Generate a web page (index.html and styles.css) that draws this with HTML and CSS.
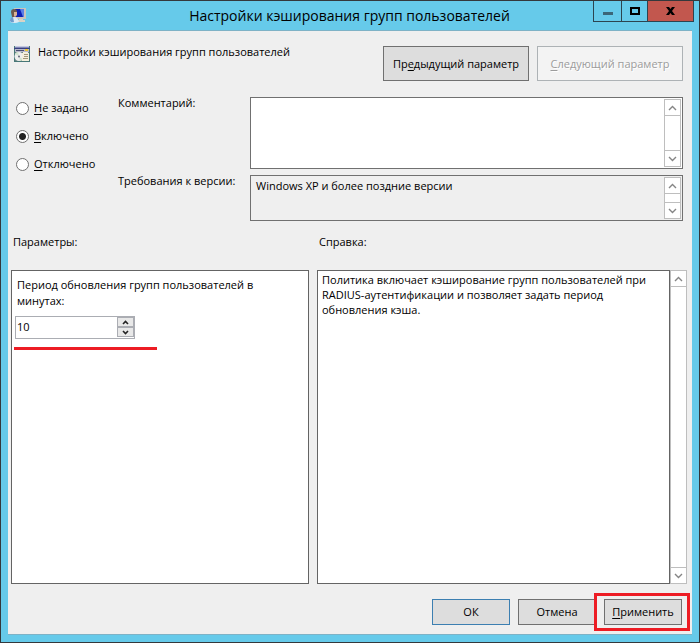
FILE: index.html
```html
<!DOCTYPE html>
<html lang="ru">
<head>
<meta charset="utf-8">
<title>Настройки кэширования групп пользователей</title>
<link rel="stylesheet" href="styles.css">
</head>
<body>
<div class="window">
  <header class="titlebar">
    <svg class="app-icon" viewBox="0 0 16 16" aria-hidden="true">
      <path d="M4 0h12v11H4z" fill="#c9c5bb"/>
      <path d="M5 1h9v8H5z" fill="#0c1fb4"/>
      <path d="M10 1h4v8h-1z" fill="#5b7fe6"/>
      <path d="M9 11h4v1h2v2H8v-2h1z" fill="#d8d3c6"/>
      <path d="M1 4q0-3 3-3t3 3v3L5 9 2 9z" fill="#6f5a4c"/>
      <path d="M4 4h3v3L5 9 4 8z" fill="#d9b295"/>
      <path d="M0 14q0-5 4-5t5 5q-4 2-9 0z" fill="#dce9f4"/>
      <path d="M0 13q0-4 3-4l1 5q-3 1-4-1z" fill="#6c9ccc"/>
    </svg>
    <h1 class="title">Настройки кэширования групп пользователей</h1>
    <div class="caption-buttons">
      <button class="caption" type="button" aria-label="Свернуть"><svg width="10" height="10" viewBox="0 0 10 10"><path d="M0 6h10v3H0z" fill="#3b6678"/></svg></button>
      <button class="caption" type="button" aria-label="Развернуть"><svg width="10" height="8" viewBox="0 0 10 8"><path d="M1 1h8v6H1z" fill="none" stroke="#000" stroke-width="2"/></svg></button>
      <button class="caption close" type="button" aria-label="Закрыть"><svg width="9" height="8" viewBox="0 0 9 8"><path d="M0 0h3l1.500 2L6 0h3L6 4l3 4H6L4.500 6 3 8H0l3-4z" fill="#000"/></svg></button>
    </div>
  </header>

  <main class="client">
    <section class="policy">
      <svg class="policy-icon" viewBox="0 0 16 16" aria-hidden="true">
        <path d="M0 0h16v16H0z" fill="#477777"/>
        <path d="M1 0h14v1H1z" fill="#c5c8e0"/>
        <path d="M1 1h14v1H1z" fill="#8086b5"/>
        <path d="M0 2h16v1H0z" fill="#39407f"/>
        <path d="M1 3h14v3H1z" fill="#b9b9cb"/>
        <path d="M2 4h8v1H2z" fill="#4a4f70"/>
        <path d="M11 3h3v2h-3z" fill="#edc52e"/>
        <path d="M1 6h14v9H1z" fill="#6c8583"/>
        <circle cx="5" cy="10.500" r="4.500" fill="#eeeeee"/>
        <path d="M5 10L1 8q1-2 3-2zM5 11l4 2q-1 2-3 2z" fill="#d2e3ce"/>
        <circle cx="5" cy="10.500" r="1" fill="#62677a"/>
        <path d="M9 6h5v1h1v8H8V7h1z" fill="#f4efdc"/>
        <path d="M10 8h4v1h-4zM10 10h4v1h-4zM9 12h5v1H9z" fill="#a2977c"/>
      </svg>
      <h2 class="policy-name">Настройки кэширования групп пользователей</h2>
      <button class="button nav" type="button"><span>Пр<u>е</u>дыдущий параметр</span></button>
      <button class="button nav" type="button" disabled><span><u>С</u>ледующий параметр</span></button>
    </section>

    <section class="state">
      <div class="radios">
        <label class="radio"><input type="radio" name="state"><span><u>Н</u>е задано</span></label>
        <label class="radio"><input type="radio" name="state" checked><span><u>В</u>ключено</span></label>
        <label class="radio"><input type="radio" name="state"><span><u>О</u>тключено</span></label>
      </div>
      <div class="fields">
        <label class="field-label" for="comment">Комментарий:</label>
        <div class="textbox tall">
          <textarea id="comment"></textarea>
          <div class="scrollbar">
            <button type="button" aria-label="Вверх"><svg viewBox="0 0 9 6"><path d="M1 5l3.500-3.500L8 5"/></svg></button>
            <button type="button" aria-label="Вниз"><svg viewBox="0 0 9 6"><path d="M1 1l3.500 3.500L8 1"/></svg></button>
          </div>
        </div>
        <label class="field-label" for="supported">Требования к версии:</label>
        <div class="textbox short">
          <textarea id="supported" readonly>Windows XP и более поздние версии</textarea>
          <div class="scrollbar">
            <button type="button" aria-label="Вверх"><svg viewBox="0 0 9 6"><path d="M1 5l3.500-3.500L8 5"/></svg></button>
            <button type="button" aria-label="Вниз"><svg viewBox="0 0 9 6"><path d="M1 1l3.500 3.500L8 1"/></svg></button>
          </div>
        </div>
      </div>
    </section>

    <section class="panes">
      <div class="pane">
        <h3 class="pane-title">Параметры:</h3>
        <div class="options">
          <label class="option-label" for="period">Период обновления групп пользователей в минутах:</label>
          <div class="spinner">
            <input id="period" type="text" inputmode="numeric" value="10">
            <div class="spin-buttons">
              <button type="button" aria-label="Больше"><svg viewBox="0 0 7 5"><path d="M1 4l2.500-2.500L6 4"/></svg></button>
              <button type="button" aria-label="Меньше"><svg viewBox="0 0 7 5"><path d="M1 1l2.500 2.500L6 1"/></svg></button>
            </div>
          </div>
          <div class="marker"></div>
        </div>
      </div>
      <div class="pane">
        <h3 class="pane-title">Справка:</h3>
        <div class="help">
          <p class="help-text">Политика включает кэширование групп пользователей при RADIUS-аутентификации и позволяет задать период обновления кэша.</p>
          <div class="scrollbar">
            <button type="button" aria-label="Вверх"><svg viewBox="0 0 9 6"><path d="M1 5l3.500-3.500L8 5"/></svg></button>
            <button type="button" aria-label="Вниз"><svg viewBox="0 0 9 6"><path d="M1 1l3.500 3.500L8 1"/></svg></button>
          </div>
        </div>
      </div>
    </section>

    <footer class="actions">
      <button class="button default" type="button">ОК</button>
      <button class="button" type="button">Отмена</button>
      <div class="highlighted"><button class="button" type="button"><span><u>П</u>рименить</span></button></div>
    </footer>
  </main>
</div>
</body>
</html>
```
FILE: styles.css
```css
* { box-sizing: border-box; }

body {
  margin: 0;
  font: 11px/16px "Open Sans", "Noto Sans", sans-serif;
  color: #000;
}

h1, h2, h3, p { margin: 0; font-weight: 400; }
h2, h3 { font-size: 11px; }
button, input, textarea { font: inherit; color: inherit; margin: 0; }
button { padding: 0; }
svg { display: block; flex: none; }
u { text-underline-offset: 2px; }

.window {
  min-height: 100vh;
  display: flex;
  flex-direction: column;
  padding: 0 7px 7px;
  background: #66caea;
  border: 1px solid #34383c;
}

.titlebar {
  display: flex;
  align-items: center;
  height: 29px;
}
.app-icon { width: 16px; height: 16px; margin-left: 2px; }
.title {
  flex: 1;
  padding-left: 80px;
  font-size: 14px;
  line-height: 20px;
  text-align: center;
  white-space: nowrap;
}
.caption-buttons {
  display: flex;
  align-self: flex-start;
  border: 1px solid #2c4450;
  border-top: 0;
  margin-right: -2px;
}
.caption {
  display: flex;
  align-items: center;
  justify-content: center;
  width: 28px;
  height: 20px;
  border: 0;
  border-right: 1px solid #2c4450;
  background: #66caea;
}
.caption + .caption { width: 26px; }
.caption.close { width: 45px; border-right: 0; background: #c2574e; }

.client {
  flex: 1;
  display: flex;
  flex-direction: column;
  padding: 0 3px;
  background: #efefef;
  border-top: 1px solid #7eb2c6;
  border-bottom: 1px solid #7eb2c6;
}

.policy {
  display: flex;
  align-items: flex-start;
  gap: 8px;
  padding: 15px 6px 0 3px;
}
.policy-icon { width: 16px; height: 16px; }
.policy-name { flex: 1; white-space: nowrap; line-height: 12px; }

.button {
  width: 78px;
  height: 26px;
  background: #ddd;
  border: 1px solid #707070;
}
.button.nav { width: 146px; height: 35px; white-space: nowrap; }
.button.default { border-color: #3c7fb1; }
.button:disabled {
  color: #9c9c9c;
  background: #f3f3f3;
  border-color: #adb2b5;
  text-shadow: 1px 1px #fff;
}

.state { display: flex; padding: 16px 6px 0 5px; }
.radios {
  display: flex;
  flex-direction: column;
  gap: 12px;
  width: 102px;
  padding-top: 3px;
}
.radio { display: flex; align-items: center; gap: 5px; white-space: nowrap; }
.radio input {
  appearance: none;
  width: 13px;
  height: 13px;
  border: 1px solid #707070;
  border-radius: 50%;
  background: #fff;
}
.radio input:checked { background: radial-gradient(circle, #222 3px, #fff 4px); }

.fields {
  flex: 1;
  display: grid;
  grid-template-columns: 132px 1fr;
  row-gap: 6px;
}
.field-label { line-height: 12px; white-space: nowrap; }
.textbox {
  display: flex;
  padding: 1px;
  background: #fff;
  border: 1px solid #707070;
}
.textbox.tall { height: 72px; }
.textbox.short { height: 46px; background: #efefef; }
.textbox textarea {
  flex: 1;
  min-width: 0;
  padding: 1px 4px;
  border: 0;
  outline: 0;
  resize: none;
  overflow: hidden;
  background: transparent;
}

.scrollbar {
  display: flex;
  flex-direction: column;
  justify-content: space-between;
  width: 17px;
  background: #fff;
  border: 1px solid #bebebe;
}
.scrollbar button {
  display: flex;
  align-items: center;
  justify-content: center;
  height: 16px;
  background: #fff;
  border: 0;
  border-bottom: 1px solid #bebebe;
}
.scrollbar button:last-child { border-bottom: 0; border-top: 1px solid #bebebe; }
.scrollbar svg { width: 9px; height: 6px; }
.scrollbar path { fill: none; stroke: #858585; stroke-width: 1.4; }

.panes {
  flex: 1;
  display: grid;
  grid-template-columns: 298fr 370fr;
  gap: 8px;
  padding: 13px 2px 0 0;
}
.pane { display: flex; flex-direction: column; gap: 20px; }
.pane-title { padding-left: 2px; line-height: 16px; }
.options {
  flex: 1;
  padding: 6px 3px;
  background: #fff;
  border: 1px solid #646464;
}
.option-label { display: block; padding-left: 2px; padding-right: 40px; }
.spinner {
  display: flex;
  width: 120px;
  height: 23px;
  margin-top: 7px;
  background: #fff;
  border: 1px solid #abadb3;
}
.spinner input {
  flex: 1;
  min-width: 0;
  padding: 0 1px;
  border: 0;
  outline: 0;
  height: 18px;
}
.spin-buttons { display: flex; flex-direction: column; width: 17px; }
.spin-buttons button {
  display: flex;
  align-items: center;
  justify-content: center;
  height: 10px;
  background: #e8e8e8;
  border: 1px solid #abadb3;
}
.spin-buttons svg { width: 7px; height: 5px; }
.spin-buttons path { fill: none; stroke: #222; stroke-width: 1.6; }
.marker { width: 143px; height: 3px; margin: 8px 0 0 -1px; background: #ed1c24; }

.help { flex: 1; display: flex; }
.help-text {
  flex: 1;
  padding: 1px 16px 1px 4px;
  line-height: 15px;
  background: #fff;
  border: 1px solid #646464;
}

.actions {
  display: flex;
  align-items: center;
  justify-content: flex-end;
  padding-top: 9px;
  padding-bottom: 3px;
}
.actions > .button:nth-child(2) { margin-left: 8px; }
.highlighted {
  position: relative;
  margin-left: -2px;
  margin-right: -1px;
  padding: 3px 5px 3px 7px;
  border: 3px solid #ed1c24;
  background: #efefef;
}
.highlighted .button { display: block; }
```
